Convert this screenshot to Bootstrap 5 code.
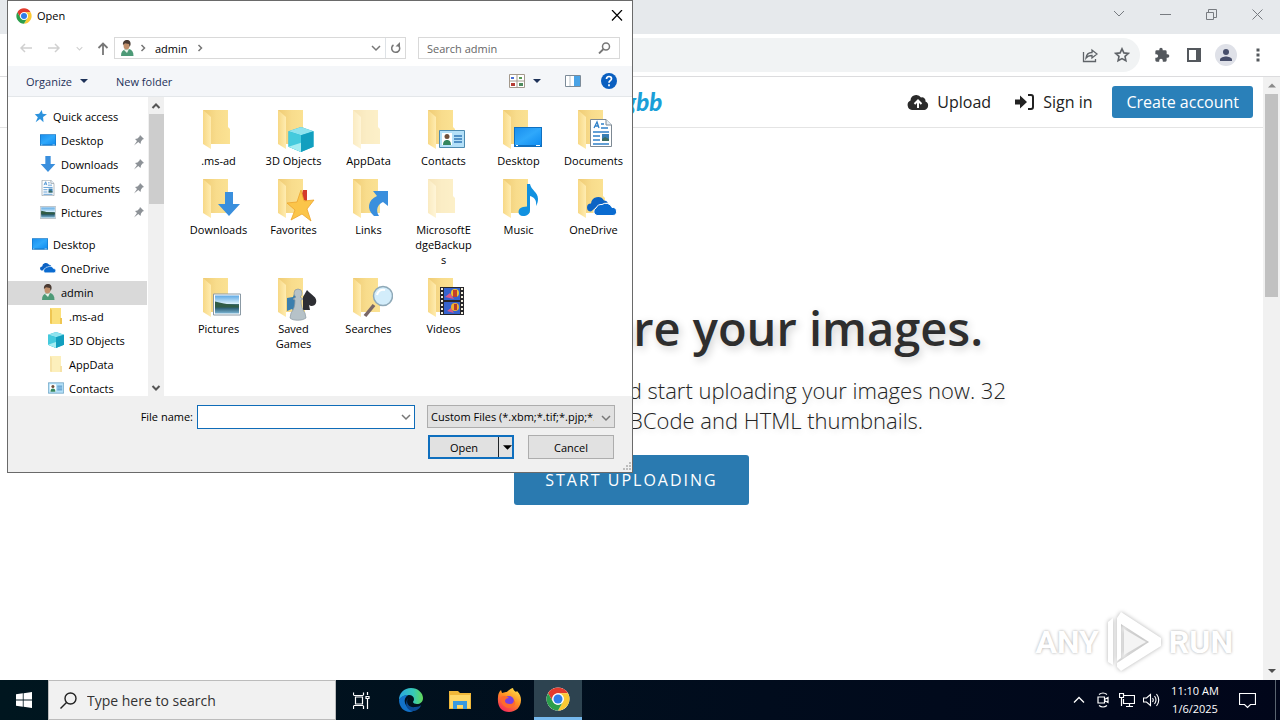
<!DOCTYPE html>
<html lang="en">
<head>
<meta charset="utf-8">
<meta name="viewport" content="width=device-width, initial-scale=1">
<title>Upload and share your images</title>
<link href="https://cdn.jsdelivr.net/npm/bootstrap@5.3.0/dist/css/bootstrap.min.css" rel="stylesheet">
<style>
  body { font-family: "Open Sans", "Noto Sans", sans-serif; color: #333; background: #fff; overflow: hidden; }
  button { background: none; border: 0; padding: 0; color: inherit; font: inherit; }
  svg { display: block; flex: none; }
  .stroke { fill: none; stroke: currentColor; }
  .icon-btn { display: grid; place-content: center; }

  /* browser frame */
  .tab-strip { height: 34px; background: #e6e9ec; color: #777b80; }
  .win-btn { width: 46px; height: 28px; }
  .tool-strip { height: 43px; padding: 0 6px 0 104px; gap: 6px; border-bottom: 1px solid #dcdcde; color: #5f6368; }
  .omnibox { height: 34px; border-radius: 17px; background: #f1f3f4; padding-right: 2px; }
  .tool-btn { width: 32px; height: 32px; }

  /* web page */
  .site-head { height: 51px; border-bottom: 1px solid #e4e4e4; font-size: 16px; padding-right: 10px; }
  .site-head a { color: #222; text-decoration: none; }
  .site-head .site-logo { font-family: Lato, "Open Sans", sans-serif; font-weight: 900; font-style: italic; font-size: 24px; line-height: 30px; color: #1b9fd8; }
  .site-head .btn-account { background: #2a80b9; color: #fff; border-radius: 3px; height: 32px; line-height: 32px; padding: 0 14px; }
  .hero { padding-bottom: 6px; }
  .hero h1 { font-size: 47px; line-height: 60px; font-weight: 600; color: #2e2e2e; text-shadow: 2px 3px 8px rgba(0,0,0,.2); margin-bottom: 17px; }
  .hero p { font-size: 22px; line-height: 30px; font-weight: 300; max-width: 768px; color: #222; text-shadow: 1px 2px 6px rgba(0,0,0,.15); margin-bottom: 20px; }
  .btn-start { background: #2a7ab0; color: #fff; font-size: 16px; letter-spacing: 2px; height: 50px; border-radius: 3px; padding: 0 31px; }
  .page-bar { width: 17px; background: #f1f1f1; color: #505050; }
  .page-bar .thumb { width: 13px; height: 203px; background: #c1c1c1; }
  .watermark { position: absolute; right: 47px; bottom: 6px; gap: 6px; color: #fff; font: 700 32px/60px Roboto, "Open Sans", sans-serif; text-shadow: 0 0 3px rgba(0,0,0,.35); }
  .watermark svg { filter: drop-shadow(0 0 2px rgba(0,0,0,.3)); }

  /* file dialog */
  .file-dialog { position: absolute; left: 7px; top: 0; width: 626px; background: #fff; border: 1px solid #6a6a6a; color: #000; font-size: 11px; line-height: 15px; }
  .dlg-title { height: 29px; padding: 0 7px 0 8px; gap: 5px; }
  .dlg-nav { height: 36px; padding: 0 12px 0 4px; color: #777; }
  .dlg-nav .faded { color: #d0d0d0; }
  .dlg-nav .step { width: 28px; }
  .dlg-nav .step-sm { width: 23px; }
  .box { height: 22px; border: 1px solid #d9d9d9; }
  .box-find { width: 202px; margin-left: 12px; }
  .box input { border: 0; outline: 0; padding: 0 0 0 8px; min-width: 0; background: none; }
  .box input::placeholder { color: #666; opacity: 1; }
  .dlg-cmd { height: 31px; background: #f4f6f9; border-bottom: 1px solid #e4e7ea; color: #1e3259; padding: 0 15px 0 18px; }
  .dlg-body { height: 299px; }
  .tree { width: 139px; padding-top: 8px; overflow: hidden; }
  .tree-row { height: 24px; flex: none; gap: 5px; padding: 0 2px 2px 32px; text-align: left; width: 100%; white-space: nowrap; }
  .tree-row.root { padding-left: 24px; }
  .tree-row.deep { padding-left: 40px; }
  .tree-row.chosen { background: #d9d9d9; }
  .tree-bar { width: 16px; background: #f0f0f0; color: #555; margin-left: 1px; }
  .tree-bar .thumb { height: 90px; width: 15px; background: #cdcdcd; }
  .files { display: grid; grid-template-columns: repeat(6, 75px); row-gap: 6px; align-content: start; padding: 8px 0 0 17px; }
  .tile { display: flex; flex-direction: column; align-items: center; text-align: center; justify-content: start; }
  .tile span { max-width: 60px; }
  .dlg-foot { height: 76px; background: #f0f0f0; padding: 9px 17px 13px 17px; gap: 6px; }
  .dlg-foot .actions { gap: 14px; padding-right: 1px; }
  .name-box { width: 218px; height: 24px; background: #fff; border: 1px solid #0f6cb8; padding-right: 3px; }
  .name-box input { border: 0; outline: 0; min-width: 0; }
  .type-box { width: 188px; height: 23px; border: 1px solid #adadad; border-radius: 0; background: #e1e1e1; appearance: none; padding: 0 20px 0 3px; color: #000; overflow: hidden; }
  .dlg-btn { width: 86px; height: 24px; background: #e1e1e1; border: 1px solid #adadad; }
  .dlg-btn.main { border: 2px solid #0f6fbe; }

  /* taskbar */
  .taskbar { height: 40px; background: linear-gradient(90deg, #00161f, #010c1d 60%, #01061a); color: #fff; }
  .task-btn { width: 49px; height: 40px; }
  .task-btn.start { width: 48px; }
  .task-find { width: 288px; height: 40px; background: #f1f1f1; border: 1px solid #bcbcbc; color: #222; padding-left: 11px; gap: 10px; }
  .task-find input { border: 0; outline: 0; background: none; font-size: 14px; min-width: 0; padding: 0; }
  .task-find input::placeholder { color: #333; opacity: 1; }
  .task-apps { padding: 0 1px; }
  .task-open { background: #2d4350; border-bottom: 3px solid #76b9ed; width: 48px; }
  .tray-btn { width: 24px; height: 40px; }
  .clock { font-size: 11px; line-height: 18px; width: 64px; }
  .tray-btn.notes { width: 40px; margin-right: 8px; }
  .peek { height: 40px; width: 5px; border-left: 1px solid #5a6470; }
</style>
</head>
<body class="vh-100 d-flex flex-column">

<svg width="0" height="0" class="position-absolute" aria-hidden="true">
  <defs>
    <linearGradient id="gFold" x1="0" x2="1"><stop offset="0" stop-color="#efcb74"/><stop offset=".5" stop-color="#f8dc8c"/><stop offset="1" stop-color="#fbe293"/></linearGradient>
    <linearGradient id="gFlap" x1="0" x2="1"><stop offset="0" stop-color="#f7d885"/><stop offset="1" stop-color="#ffecb0"/></linearGradient>
    <linearGradient id="gDesk" x1="0" y1="0" x2="1" y2="1"><stop offset="0" stop-color="#1a8fee"/><stop offset=".5" stop-color="#2fa8fb"/><stop offset="1" stop-color="#0f8cf0"/></linearGradient>
    <linearGradient id="gSky" x1="0" y1="0" x2="0" y2="1"><stop offset="0" stop-color="#5ea9e4"/><stop offset=".45" stop-color="#d9effa"/><stop offset=".5" stop-color="#3b6a6b"/><stop offset=".7" stop-color="#2d5f73"/><stop offset="1" stop-color="#7db6d6"/></linearGradient>
    <linearGradient id="gEdge" x1="0" y1="0" x2="1" y2="0"><stop offset="0" stop-color="#2aa7e2"/><stop offset=".6" stop-color="#36c8b8"/><stop offset="1" stop-color="#63d957"/></linearGradient>
    <linearGradient id="gFox" x1=".8" y1="0" x2=".2" y2="1"><stop offset="0" stop-color="#ffe14a"/><stop offset=".45" stop-color="#ff9022"/><stop offset="1" stop-color="#f5225f"/></linearGradient>
  </defs>
  <symbol id="chrome" viewBox="0 0 48 48">
    <circle cx="24" cy="24" r="23" fill="#fff"/>
    <path d="M4.100 12.500A23 23 0 0 1 43.900 12.500H24a11.500 11.500 0 0 0-10 17.200z" fill="#e33b2e"/>
    <path d="M43.900 12.500A23 23 0 0 1 24 47L34 29.700A11.500 11.500 0 0 0 24 12.500z" fill="#fcc934"/>
    <path d="M4.100 12.500L14 29.700a11.500 11.500 0 0 0 20 0L24 47A23 23 0 0 1 4.100 12.500z" fill="#2c9e4b"/>
    <circle cx="24" cy="24" r="11.500" fill="#fff"/><circle cx="24" cy="24" r="9" fill="#2f7de9"/>
  </symbol>
  <symbol id="user" viewBox="0 0 16 16">
    <path d="M2 16c0-4 1.500-6 4-6.500l4-.5c3 .5 4.500 3 4.500 7z" fill="#4d9a77"/><path d="M5 10l3 3 2-4z" fill="#e8f2ea"/>
    <ellipse cx="7.500" cy="5.500" rx="3" ry="4" fill="#c08f6b"/><path d="M4 5C3.500 1.500 5.500 0 8 0s4 1.500 3.500 5l-1 2-.500-3-4-.800z" fill="#4a3b33"/>
  </symbol>
  <symbol id="folder" viewBox="0 0 48 48">
    <path d="M8 5h25v17l2 2v15H12z" fill="url(#gFold)"/>
    <path d="M8 5l8 7v32L8 39z" fill="url(#gFlap)"/>
  </symbol>
  <symbol id="arrowDown" viewBox="0 0 24 24"><path d="M8 0h8v12h7L12 24 1 12h7z" fill="#3a8fdd"/></symbol>
  <symbol id="desk" viewBox="0 0 28 20"><path d="M0 0h28v20H0z" fill="#1070c0"/><path d="M1 1h26v17H1z" fill="url(#gDesk)"/><path d="M2 18.500h2m18 0h4" stroke="#fff" stroke-width="1"/></symbol>
  <symbol id="cube" viewBox="0 0 24 24"><path d="M12 0l12 4v15l-12 5L0 19V4z" fill="#25b4d1"/><path d="M12 0l12 4-12 4L0 4z" fill="#8fe3ee"/><path d="M0 4l12 4v16L0 19z" fill="#45cadd"/><path d="M12 8l12-4v15l-12 5z" fill="#129fbf"/><path d="M0 19l12-4v9z" fill="#a5edf2"/></symbol>
  <symbol id="doc" viewBox="0 0 22 28"><path d="M.5.5h15.500l5.500 5.500v21.500H.5z" fill="#fff" stroke="#7d8993"/><path d="M16 .5v5.500h5.500" fill="#e6eef5" stroke="#7d8993"/><path d="M4 9l3-6 2 6M5 7h3M11 5h3M11 9h7M3 13h16M3 17h7M3 21h7M3 25h16" stroke="#2f80c8" stroke-width="1.300" fill="none"/><path d="M12 15h7v7h-7z" fill="#387fb5"/><path d="M12 20l3-2 4 2v2h-7z" fill="#3d6d62"/></symbol>
  <symbol id="pic" viewBox="0 0 28 22"><path d="M.5.5h27v21H.5z" fill="#fff" stroke="#8b9aa5"/><path d="M2 2h24v18H2z" fill="url(#gSky)"/><path d="M2 8c6 1 10 3 24 4v2H2z" fill="#315c45"/></symbol>
  <symbol id="cloud" viewBox="0 0 30 20"><path d="M4 15a4 4 0 0 1 0-8 7 7 0 0 1 13-3 6 6 0 0 1 4 2l-4 1-8 4z" fill="#0c63c4"/><path d="M10 19a4 4 0 0 1-1-7.500A6 6 0 0 1 15 8a6.500 6.500 0 0 1 10 3 4 4 0 0 1 1 8z" fill="#0a6bd0" stroke="#fff" stroke-width="1"/></symbol>
  <symbol id="card-id" viewBox="0 0 26 18"><path d="M.5.5h25v17H.5z" fill="#b4e0f8" stroke="#4d8bb0"/><path d="M3 3h10v12H3z" fill="#fff"/><path d="M4 15c0-4 2-5 4-5s4 1 4 5z" fill="#34865f"/><circle cx="8" cy="6.500" r="2.500" fill="#70503c"/><path d="M15 6h8M15 9h8M15 12h8" stroke="#3077b5" stroke-width="1.300"/></symbol>
  <symbol id="pin" viewBox="0 0 12 12"><path d="M7 1l4 4-1.500.500L8 7.500 7.500 10 5.300 8 1 11.500 4 7 2 5l2.500-.500L6.500 2.500z" fill="#8d9297"/></symbol>
  <symbol id="starBlue" viewBox="0 0 16 16"><path d="M10 1l1 4.500 5 .5-4.500 3 .5 6-4-3.500L3 15l2.500-5.500L2 6l5-.500z" fill="#2c92dd"/></symbol>
  <symbol id="miniFolder" viewBox="0 0 16 16"><path d="M2 0h11v11l1 1v4H2z" fill="#fbe07c"/><path d="M2 0l2 2v14l-2-1zM12 10h2v6h-2z" fill="#efc652"/></symbol>
  <symbol id="chevR" viewBox="0 0 8 8"><path d="M2.500 1l3 3-3 3" class="stroke" stroke-width="1.500"/></symbol>
  <symbol id="chevD" viewBox="0 0 10 10"><path d="M1 3l4 4 4-4" class="stroke" stroke-width="1.500"/></symbol>
  <symbol id="triD" viewBox="0 0 8 8"><path d="M0 2h8L4 6z" fill="currentColor"/></symbol>
</svg>

<main class="flex-grow-1 d-flex flex-column position-relative" style="min-height:0">
  <div class="tab-strip d-flex justify-content-end">
    <button class="win-btn icon-btn" aria-label="Search tabs"><svg width="12" height="12" viewBox="0 0 12 12"><path d="M1 3l5 5 5-5" class="stroke"/></svg></button>
    <button class="win-btn icon-btn" aria-label="Minimize"><svg width="11" height="11" viewBox="0 0 11 11"><path d="M0 5.500h11" class="stroke"/></svg></button>
    <button class="win-btn icon-btn" aria-label="Restore"><svg width="11" height="11" viewBox="0 0 11 11"><path d="M.5 3.500h7v7h-7zM2.500 3V.5h8v8H8" class="stroke"/></svg></button>
    <button class="win-btn icon-btn" aria-label="Close window"><svg width="11" height="11" viewBox="0 0 11 11"><path d="M.5.5l10 10M10.500.5l-10 10" class="stroke"/></svg></button>
  </div>
  <div class="tool-strip d-flex align-items-center">
    <div class="omnibox flex-grow-1 d-flex justify-content-end align-items-center">
      <button class="tool-btn icon-btn" aria-label="Share"><svg width="16" height="16" viewBox="0 0 16 16"><path d="M1.500 5v9.500h12V12M4 11c.5-4 3-5.500 6-5.500V3l5 4-5 4V8.500C7.500 8.500 5.500 9 4 11z" class="stroke" stroke-width="1.300"/></svg></button>
      <button class="tool-btn icon-btn" aria-label="Bookmark"><svg width="16" height="16" viewBox="0 0 16 16"><path d="M8 1.800l1.900 4.100 4.400.5-3.300 3 .9 4.400L8 11.600l-3.900 2.200.9-4.400-3.300-3 4.400-.5z" class="stroke" stroke-width="1.600"/></svg></button>
    </div>
    <div class="d-flex">
      <button class="tool-btn icon-btn" aria-label="Extensions"><svg width="16" height="16" viewBox="0 0 24 24"><path d="M20.500 11H19V7a2 2 0 0 0-2-2h-4V3.500a2.500 2.500 0 0 0-5 0V5H4a2 2 0 0 0-2 2v3.800h1.500a2.700 2.700 0 0 1 0 5.400H2V20a2 2 0 0 0 2 2h3.800v-1.500a2.700 2.700 0 0 1 5.400 0V22H17a2 2 0 0 0 2-2v-4h1.500a2.500 2.500 0 0 0 0-5z" fill="#54585d"/></svg></button>
      <button class="tool-btn icon-btn" aria-label="Side panel"><svg width="14" height="14" viewBox="0 0 14 14"><path d="M1 1h12v12H1z" fill="none" stroke="#54585d" stroke-width="2"/><path d="M9 0h5v14H9z" fill="#54585d"/></svg></button>
      <button class="tool-btn icon-btn" aria-label="Profile"><svg width="22" height="22" viewBox="0 0 22 22"><circle cx="11" cy="11" r="11" fill="#dfe1e8"/><circle cx="11" cy="8" r="3" fill="#484f6b"/><path d="M5 17v-1.500c0-2 4-3 6-3s6 1 6 3V17z" fill="#484f6b"/></svg></button>
      <button class="tool-btn icon-btn" aria-label="Menu"><svg width="4" height="14" viewBox="0 0 4 14"><path d="M.5.5h3v3h-3zM.5 5.500h3v3h-3zM.5 10.500h3v3h-3z" fill="#54585d"/></svg></button>
    </div>
  </div>

  <div class="flex-grow-1 d-flex" style="min-height:0">
    <div class="flex-grow-1 d-flex flex-column position-relative">
      <header class="site-head row g-0 align-items-center">
        <div class="col"></div>
        <a href="#" class="site-logo col-auto ms-2">imgbb</a>
        <nav class="col d-flex justify-content-end align-items-center">
          <a href="#" class="d-flex align-items-center gap-2 me-4"><svg width="22" height="18" viewBox="0 0 22 18"><path d="M5 17a5 5 0 0 1-1.500-9.500A5.500 5.500 0 0 1 9 2a5.500 5.500 0 0 1 5 2.500 3.500 3.500 0 0 1 4.500 4A4.500 4.500 0 0 1 17.500 17z" fill="#2a2a2a"/><path d="M11 15V8M7.500 11L11 7.500l3.500 3.500" fill="none" stroke="#fff" stroke-width="2"/></svg>Upload</a>
          <a href="#" class="d-flex align-items-center gap-2 me-3"><svg width="20" height="16" viewBox="0 0 20 16"><path d="M0 5.500h5V1.500L12 8l-7 6.500v-4H0z" fill="#222"/><path d="M13 1h3a2 2 0 0 1 2 2v10a2 2 0 0 1-2 2h-3" fill="none" stroke="#222" stroke-width="2"/></svg>Sign in</a>
          <a href="#" class="btn-account ms-1">Create account</a>
        </nav>
      </header>
      <section class="hero flex-grow-1 d-flex flex-column align-items-center justify-content-center text-center">
        <h1>Upload and share your images.</h1>
        <p>Drag and drop anywhere you want and start uploading your images now. 32 MB limit. Direct image links, BBCode and HTML thumbnails.</p>
        <button class="btn-start">START UPLOADING</button>
      </section>
    </div>
    <div class="page-bar d-flex flex-column align-items-center justify-content-between py-1">
      <div class="d-flex flex-column align-items-center gap-1"><svg width="8" height="9" viewBox="0 0 8 8"><path d="M0 6h8L4 2z" fill="#8a8a8a"/></svg><div class="thumb"></div></div>
      <svg width="8" height="10"><use href="#triD"/></svg>
    </div>
  </div>

  <div class="watermark d-flex align-items-center">
    <span>ANY</span>
    <svg width="58" height="64" viewBox="0 0 58 64"><path d="M12 8l4-6 40 26v8L16 61l-4-4v-4l32-21-28-18v34l-4 3z" fill="#fff"/><path d="M19 19l22 13-22 13z" fill="#f4f4f4"/><path d="M3 12l5-4v47l-5-3z" fill="#fff"/></svg>
    <span>RUN</span>
  </div>

  <section class="file-dialog" role="dialog" aria-label="Open">
    <div class="dlg-title d-flex align-items-center">
      <svg width="16" height="16"><use href="#chrome"/></svg><span class="flex-grow-1">Open</span>
      <button aria-label="Close"><svg width="16" height="11" viewBox="0 0 16 11"><path d="M3 0l10 10.500M13 0L3 10.500" class="stroke" stroke-width="1.200"/></svg></button>
    </div>
    <div class="dlg-nav d-flex align-items-center">
      <button class="faded step d-flex justify-content-center" aria-label="Back"><svg width="12" height="12" viewBox="0 0 12 12"><path d="M12 6H1M5 2L1 6l4 4" class="stroke" stroke-width="1.500"/></svg></button>
      <button class="faded step d-flex justify-content-center" aria-label="Forward"><svg width="12" height="12" viewBox="0 0 12 12"><path d="M0 6h11M7 2l4 4-4 4" class="stroke" stroke-width="1.500"/></svg></button>
      <button class="faded step-sm d-flex justify-content-center" aria-label="Recent"><svg width="7" height="7"><use href="#chevD"/></svg></button>
      <button class="step-sm d-flex justify-content-center" aria-label="Up"><svg width="12" height="13" viewBox="0 0 12 13"><path d="M6 13V1.500M1.500 6L6 1.500 10.500 6" class="stroke" stroke-width="1.800"/></svg></button>
      <div class="box flex-grow-1 d-flex align-items-center">
        <svg width="16" height="16" class="ms-1"><use href="#user"/></svg>
        <svg width="8" height="8" class="ms-1 me-2"><use href="#chevR"/></svg>
        <span class="text-black">admin</span>
        <svg width="8" height="8" class="ms-2 me-auto"><use href="#chevR"/></svg>
        <button class="px-1" aria-label="Previous locations"><svg width="10" height="10"><use href="#chevD"/></svg></button>
        <button class="border-start h-100 px-1" aria-label="Refresh"><svg width="11" height="12" viewBox="0 0 11 12"><path d="M8.500 3.500A4 4 0 1 1 3.500 3" class="stroke" stroke-width="1.500"/><path d="M5.500 4.500h4.500V0z" fill="currentColor"/></svg></button>
      </div>
      <div class="box box-find d-flex align-items-center">
        <input type="search" class="flex-grow-1" placeholder="Search admin" aria-label="Search admin">
        <svg width="13" height="12" viewBox="0 0 13 12" class="me-2"><circle cx="8" cy="4.500" r="3.500" class="stroke" stroke-width="1.500"/><path d="M5.500 7L1 11.500" class="stroke" stroke-width="1.800"/></svg>
      </div>
    </div>
    <div class="dlg-cmd d-flex align-items-center">
      <button class="d-flex align-items-center gap-2">Organize <svg width="8" height="8"><use href="#triD"/></svg></button>
      <button class="ms-4 ps-1 me-auto">New folder</button>
      <button aria-label="View"><svg width="16" height="14" viewBox="0 0 16 14"><path d="M.5.5h15v13H.5zM8 .5v13M.5 7h15" fill="#fff" stroke="#a3998c"/><path d="M2 3h3v2H2z" fill="#4a6fd4"/><path d="M10 3h3v2h-3z" fill="#5b9a56"/><path d="M2 9h4v3H2z" fill="#b53c34"/><path d="M10 9h4v3h-4z" fill="#4e8a5d"/></svg></button>
      <button class="ms-2 me-1" aria-label="View options"><svg width="8" height="8"><use href="#triD"/></svg></button>
      <button class="ms-3 ps-1" aria-label="Preview pane"><svg width="16" height="12" viewBox="0 0 16 12"><path d="M.5.5h15v11H.5z" fill="#fff" stroke="#7c8b99"/><path d="M9 1h6v10H9z" fill="#4aa3e6"/><path d="M5 1v10" stroke="#b9c2c9"/></svg></button>
      <button class="ms-3 ps-1" aria-label="Help"><svg width="16" height="16" viewBox="0 0 16 16"><circle cx="8" cy="8" r="8" fill="#0a5fc0"/><path d="M5.500 6c0-3.300 5-3.300 5-.3 0 2-2.500 2-2.500 4M8 11.300v2" fill="none" stroke="#fff" stroke-width="1.700"/></svg></button>
    </div>
    <div class="dlg-body d-flex">
      <div class="tree d-flex flex-column">
        <button class="tree-row root d-flex align-items-center"><svg width="16" height="14"><use href="#starBlue"/></svg>Quick access</button>
        <button class="tree-row d-flex align-items-center"><svg width="16" height="12"><use href="#desk"/></svg><span class="flex-grow-1">Desktop</span><svg width="12" height="12"><use href="#pin"/></svg></button>
        <button class="tree-row d-flex align-items-center"><svg width="16" height="16"><use href="#arrowDown"/></svg><span class="flex-grow-1">Downloads</span><svg width="12" height="12"><use href="#pin"/></svg></button>
        <button class="tree-row d-flex align-items-center"><svg width="16" height="16"><use href="#doc"/></svg><span class="flex-grow-1">Documents</span><svg width="12" height="12"><use href="#pin"/></svg></button>
        <button class="tree-row d-flex align-items-center"><svg width="16" height="13"><use href="#pic"/></svg><span class="flex-grow-1">Pictures</span><svg width="12" height="12"><use href="#pin"/></svg></button>
        <button class="tree-row root d-flex align-items-center mt-2"><svg width="16" height="12"><use href="#desk"/></svg>Desktop</button>
        <button class="tree-row d-flex align-items-center"><svg width="16" height="12"><use href="#cloud"/></svg>OneDrive</button>
        <button class="tree-row chosen d-flex align-items-center"><svg width="16" height="16"><use href="#user"/></svg>admin</button>
        <button class="tree-row deep d-flex align-items-center"><svg width="16" height="16"><use href="#miniFolder"/></svg>.ms-ad</button>
        <button class="tree-row deep d-flex align-items-center"><svg width="16" height="16"><use href="#cube"/></svg>3D Objects</button>
        <button class="tree-row deep d-flex align-items-center"><svg width="16" height="16" opacity=".5"><use href="#miniFolder"/></svg>AppData</button>
        <button class="tree-row deep d-flex align-items-center"><svg width="16" height="12"><use href="#card-id"/></svg>Contacts</button>
      </div>
      <div class="tree-bar d-flex flex-column align-items-center justify-content-between pt-1 pb-1">
        <div class="d-flex flex-column align-items-center gap-1"><svg width="10" height="9" viewBox="0 0 10 9"><path d="M1.500 7L5 3.500 8.500 7" class="stroke" stroke-width="2"/></svg><div class="thumb"></div></div>
        <svg width="10" height="8" viewBox="0 0 10 8"><path d="M1.500 2L5 5.500 8.500 2" class="stroke" stroke-width="2"/></svg>
      </div>
      <div class="files flex-grow-1">
        <button class="tile"><svg width="48" height="48"><use href="#folder"/></svg><span>.ms-ad</span></button>
        <button class="tile"><svg width="48" height="48"><use href="#folder"/><use href="#cube" x="18" y="22" width="26" height="25"/></svg><span>3D Objects</span></button>
        <button class="tile"><svg width="48" height="48" opacity=".5"><use href="#folder"/></svg><span>AppData</span></button>
        <button class="tile"><svg width="48" height="48"><use href="#folder"/><use href="#card-id" x="19" y="25" width="26" height="18"/></svg><span>Contacts</span></button>
        <button class="tile"><svg width="48" height="48"><use href="#folder"/><use href="#desk" x="19" y="22" width="28" height="20"/></svg><span>Desktop</span></button>
        <button class="tile"><svg width="48" height="48"><use href="#folder"/><use href="#doc" x="20" y="14" width="22" height="28"/></svg><span>Documents</span></button>
        <button class="tile"><svg width="48" height="48"><use href="#folder"/><use href="#arrowDown" x="22" y="18" width="24" height="24"/></svg><span>Downloads</span></button>
        <button class="tile"><svg width="48" height="48"><use href="#folder"/><path d="M33 16h4v12l-6-4z" fill="#d33a2d"/><path d="M31 16l3 11 10-1-7 9 4 12-9-7-11 6 4-10-8-7 10-1z" fill="#fbc54a" stroke="#eda52c" stroke-width=".8"/></svg><span>Favorites</span></button>
        <button class="tile"><svg width="48" height="48"><use href="#folder"/><path d="M29 42c-8-7-6-16 3-20l-4-5h15v15l-5-4c-5 2-8 8-4 14z" fill="#3a8fdd"/></svg><span>Links</span></button>
        <button class="tile"><svg width="48" height="48" opacity=".5"><use href="#folder"/></svg><span>MicrosoftE<wbr>dgeBackup<wbr>s</span></button>
        <button class="tile"><svg width="48" height="48"><use href="#folder"/><path d="M32 10h3c1 6 8 8 8 15 0 3-1 5-2 7 1-6-2-9-6-10v14c0 4-3 6-7 6-6 0-6-8 0-9l4-.500z" fill="#1191e0"/></svg><span>Music</span></button>
        <button class="tile"><svg width="48" height="48"><use href="#folder"/><use href="#cloud" x="17" y="22" width="30" height="21"/></svg><span>OneDrive</span></button>
        <button class="tile"><svg width="48" height="48"><use href="#folder"/><use href="#pic" x="18" y="20" width="28" height="23"/></svg><span>Pictures</span></button>
        <button class="tile"><svg width="48" height="48"><use href="#folder"/><path d="M17 25l6-1 1-3 4 1v15l-4 2-2-3-5 2z" fill="#3b7fae"/><path d="M37 17c4 5 11 7 9 13-1 3-5 4-7 2l1 5h-7V24z" fill="#2d2e33"/><path d="M24 20a4 4 0 1 1 8 0c0 2-1 3-2 4l3 2-2 1c0 6 1 9 4 13l1 5c-4 3-13 3-16 0l1-5c3-4 4-7 4-13l-2-1 3-2c-1-1-2-2-2-4z" fill="#b6c2c8" stroke="#8a979f" stroke-width=".7"/></svg><span>Saved Games</span></button>
        <button class="tile"><svg width="48" height="48"><use href="#folder"/><path d="M29 32L20 43" stroke="#796767" stroke-width="3.500"/><circle cx="38" cy="23" r="9.500" fill="#d3edfb" stroke="#8fa9b8" stroke-width="1.500"/><path d="M32 22c1-4 4-6 8-5" fill="none" stroke="#fff" stroke-width="2"/></svg><span>Searches</span></button>
        <button class="tile"><svg width="48" height="48"><use href="#folder"/><path d="M20 14h24v28H20z" fill="#27272b"/><path d="M22 15v27M42 15v27" stroke="#f3efe0" stroke-width="2" stroke-dasharray="2 2"/><path d="M24 15h16v12H24zM24 29h16v12H24z" fill="#3563cf"/><path d="M25 24l5-4 4 6zM27 38l4-3 3 5z" fill="#d7598b"/><circle cx="35" cy="20" r="4" fill="#f3c52e"/><path d="M33 17h4v7h-4z" fill="#c2402c"/><circle cx="35" cy="34" r="4" fill="#f0b12b"/><path d="M34 31h3v6h-3z" fill="#b53a2b"/></svg><span>Videos</span></button>
      </div>
    </div>
    <div class="dlg-foot d-flex flex-column position-relative">
      <div class="d-flex justify-content-end">
        <label for="fname" class="pt-1 me-1">File name:</label>
        <div class="name-box d-flex align-items-center"><input id="fname" type="text" class="flex-grow-1"><svg width="10" height="10" color="#777"><use href="#chevD"/></svg></div>
        <div class="position-relative ms-2 ps-1">
          <select class="type-box" aria-label="File type"><option>Custom Files (*.xbm;*.tif;*.pjp;*.apng;*.jpeg)</option></select>
          <svg width="10" height="10" class="position-absolute top-0 end-0 mt-2 me-1" color="#777"><use href="#chevD"/></svg>
        </div>
      </div>
      <div class="actions d-flex justify-content-end">
        <button class="dlg-btn main d-flex align-items-center"><span class="flex-grow-1 text-center">Open</span><span class="border-start border-dark h-100 d-flex align-items-center ps-1"><svg width="9" height="9"><use href="#triD"/></svg></span></button>
        <button class="dlg-btn">Cancel</button>
      </div>
      <svg width="10" height="10" viewBox="0 0 10 10" class="position-absolute bottom-0 end-0"><path d="M7 0h2v2H7zM4 3h2v2H4zM7 3h2v2H7zM1 6h2v2H1zM4 6h2v2H4zM7 6h2v2H7z" fill="#bdbdbd"/></svg>
    </div>
  </section>
</main>

<footer class="taskbar d-flex align-items-center">
  <button class="task-btn start icon-btn" aria-label="Start"><svg width="16" height="16" viewBox="0 0 16 16"><path d="M0 2.200L6.800 1.300v6.300H0zM7.600 1.200L16 0v7.600H7.600zM0 8.400h6.800v6.300L0 13.800zM7.600 8.400H16V16l-8.400-1.200z" fill="#fff"/></svg></button>
  <div class="task-find d-flex align-items-center">
    <svg width="17" height="17" viewBox="0 0 17 17"><circle cx="10.500" cy="6.500" r="5.500" class="stroke" stroke-width="1.400"/><path d="M6.500 10.500L.5 16.500" class="stroke" stroke-width="1.400"/></svg>
    <input type="search" class="flex-grow-1" placeholder="Type here to search" aria-label="Type here to search">
  </div>
  <div class="task-apps d-flex">
    <button class="task-btn icon-btn" aria-label="Task view"><svg width="17" height="17" viewBox="0 0 17 17"><path d="M.5 3V.5M10.500 3V.5M.5 3.500h10M2.500 5v7h7V5zM.5 13.500h10M.5 14v3M10.500 14v3M14.500 0v3M14.500 7v10M13 4.500h3v2h-3z" fill="none" stroke="#fff" stroke-width="1.200"/></svg></button>
    <button class="task-btn icon-btn" aria-label="Edge"><svg width="24" height="24" viewBox="0 0 24 24"><path d="M0 12C0 5 5 0 12 0s12 5 12 10c0 4-3 6-6 6-2 0-4-1-4-2s1-1 1-3-2-4-5-4C5 7 1 10 0 12z" fill="url(#gEdge)"/><path d="M0 12c1-3 5-5 9-5-3 2-4 5-3 8s4 7 9 7c-1 1-2 2-4 2C5 24 0 19 0 12z" fill="#1272c9"/><path d="M9 10c-3 6 2 10 7 9 3 0 5-1 6-2-1 4-5 6-8 6-6 0-9-7-5-13z" fill="#0b4a94"/></svg></button>
    <button class="task-btn icon-btn" aria-label="File Explorer"><svg width="22" height="20" viewBox="0 0 22 20"><path d="M0 1h9l2 2h11v16H0z" fill="#f0b83a"/><path d="M1 5h20v13H1z" fill="#ffd868"/><path d="M4 19v-8h14v8h-4v-4H8v4z" fill="#3a9ae0"/></svg></button>
    <button class="task-btn icon-btn" aria-label="Firefox"><svg width="24" height="24" viewBox="0 0 24 24"><path d="M1 9c0-3 1-5 3-7l1 3 4-1c0 0 1 0 2-1 2-2 4-3 5-3 0 2 2 3 3 4l1-1c3 3 4 6 4 9 0 7-5 12-12 12S0 19 1 9z" fill="url(#gFox)"/><circle cx="12" cy="13" r="5" fill="#7a3fe0"/><path d="M4 9c3-2 6-1 8 1-2 0-4 1-4 3s2 3 5 3 4-2 4-4c3 3 0 8-5 8S3 15 4 9z" fill="#ff6a2c"/></svg></button>
  </div>
  <button class="task-open icon-btn h-100" aria-label="Chrome"><svg width="24" height="24"><use href="#chrome"/></svg></button>
  <div class="ms-auto d-flex align-items-center">
    <button class="tray-btn icon-btn" aria-label="Hidden icons"><svg width="12" height="12" viewBox="0 0 12 12"><path d="M1 8.500L6 3.500l5 5" class="stroke" stroke-width="1.300"/></svg></button>
    <button class="tray-btn icon-btn" aria-label="Meet now"><svg width="12" height="16" viewBox="0 0 12 16"><path d="M2 2.500Q6-.5 10 2.500M2 13.500q4 3 8 0M1 5h6.500v6H1zM7.500 7.500L11 5.500v5l-3.500-2z" class="stroke" stroke-width="1.200"/></svg></button>
    <button class="tray-btn icon-btn" aria-label="Network"><svg width="16" height="15" viewBox="0 0 16 15"><path d="M5 2.500h10.500v8H4.500V6M7 13.500h7M10.500 11v2.500M.5.5h4v4h-4zM2.500 5v8" class="stroke" stroke-width="1.200"/></svg></button>
    <button class="tray-btn icon-btn" aria-label="Volume"><svg width="17" height="14" viewBox="0 0 17 14"><path d="M.5 5h3l4-3.500v11L3.500 9h-3zM9.500 5q1.500 2 0 4M11.500 3q3 4 0 8M13.500 1q4.500 6 0 12" class="stroke" stroke-width="1.100"/></svg></button>
    <div class="clock text-center">11:10 AM<br>1/6/2025</div>
    <button class="tray-btn notes icon-btn" aria-label="Notifications"><svg width="17" height="17" viewBox="0 0 17 17"><path d="M.5 1.500h16v11h-5l-3 3-3-3h-5z" class="stroke" stroke-width="1.200"/></svg></button>
    <div class="peek"></div>
  </div>
</footer>

<script src="https://cdn.jsdelivr.net/npm/bootstrap@5.3.0/dist/js/bootstrap.bundle.min.js"></script>
</body>
</html>
